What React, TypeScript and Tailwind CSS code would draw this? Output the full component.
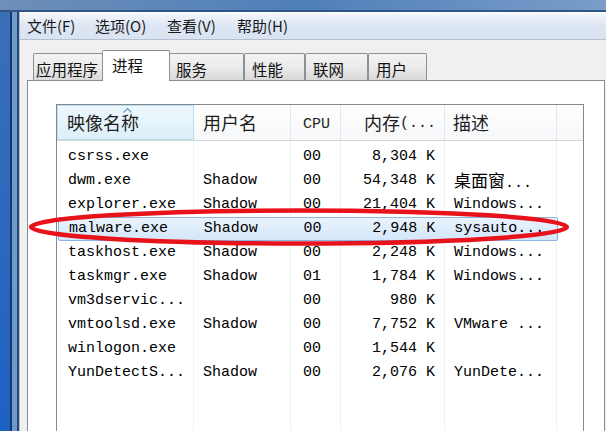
import React from "react";

const cjk = { fontFamily: '"Noto Sans CJK SC", "Noto Sans", sans-serif' };
const mono = { fontFamily: '"Liberation Mono", "Noto Sans CJK SC", monospace' };

const rows: string[][] = [
  ["csrss.exe", "", "00", "8,304 K", ""],
  ["dwm.exe", "Shadow", "00", "54,348 K", "桌面窗..."],
  ["explorer.exe", "Shadow", "00", "21,404 K", "Windows..."],
  ["malware.exe", "Shadow", "00", "2,948 K", "sysauto..."],
  ["taskhost.exe", "Shadow", "00", "2,248 K", "Windows..."],
  ["taskmgr.exe", "Shadow", "01", "1,784 K", "Windows..."],
  ["vm3dservic...", "", "00", "980 K", ""],
  ["vmtoolsd.exe", "Shadow", "00", "7,752 K", "VMware ..."],
  ["winlogon.exe", "", "00", "1,544 K", ""],
  ["YunDetectS...", "Shadow", "00", "2,076 K", "YunDete..."],
];

const tabs = [
  { label: "应用程序", w: "w-[70px]", pl: "pl-[2px]" },
  { label: "进程", w: "w-[68px]", pl: "pl-[9px]", active: true },
  { label: "服务", w: "w-[75px]", pl: "pl-[6px]" },
  { label: "性能", w: "w-[61px]", pl: "pl-[7px]" },
  { label: "联网", w: "w-[63px]", pl: "pl-[7px]" },
  { label: "用户", w: "w-[59px]", pl: "pl-[7px]" },
];

function Tab({ label, w, pl, active }: { label: string; w: string; pl: string; active?: boolean }) {
  if (active) {
    return (
      <div
        className={`${w} ${pl} h-[31px] -mb-px -mx-px z-10 bg-white border border-b-0 border-[#8c8e94] rounded-t-[2px] text-[15.5px] leading-[28px] text-[#111]`}
        style={cjk}
      >
        {label}
      </div>
    );
  }
  return (
    <div
      className={`${w} ${pl} h-[27px] bg-gradient-to-b from-[#f3f3f3] via-[#ebebeb] to-[#d9d9d9] border border-b-0 border-[#8e9096] rounded-t-[2px] text-[15.5px] leading-[30px] text-[#111]`}
      style={cjk}
    >
      {label}
    </div>
  );
}

function HeaderCell({
  w,
  children,
  sorted,
  className = "",
  style,
}: {
  w: string;
  children?: React.ReactNode;
  sorted?: boolean;
  className?: string;
  style?: React.CSSProperties;
}) {
  return (
    <div
      className={`${w} relative h-full flex items-center shrink-0 whitespace-nowrap ${
        sorted
          ? "bg-gradient-to-b from-[#eef8fd] to-[#ddeff9] border border-[#b7dcf2]"
          : "border-r border-[#e3e6ea]"
      } ${className}`}
      style={style}
    >
      {sorted && (
        <svg className="absolute left-[65px] top-[2px]" width="9" height="5" viewBox="0 0 9 5">
          <path d="M0.5 4.5 L4.5 0.5 L8.5 4.5" fill="none" stroke="#6a9cc4" strokeWidth="1.2" />
        </svg>
      )}
      {children}
    </div>
  );
}

export default function App() {
  return (
    <div className="relative w-[606px] h-[431px] overflow-hidden flex flex-col bg-[#f0f0f0]">
      {/* title bar strip */}
      <div className="h-[12px] shrink-0 bg-gradient-to-r from-[#6d8fb8] via-[#4f7fb8] to-[#7a9dc9] border-b-2 border-[#2f5586]" />

      <div className="flex flex-1 min-h-0">
        {/* left frame */}
        <div className="flex shrink-0 w-[20px]">
          <div className="w-[10px] bg-gradient-to-b from-[#3a6fb8] to-[#1d61c4]" />
          <div className="w-[2px] bg-[#1a3766]" />
          <div className="w-[5px] bg-[#6e9bcd]" />
          <div className="w-[2px] bg-[#25497a]" />
          <div className="w-[1px] bg-[#b9bcc2]" />
        </div>

        <div className="flex-1 flex flex-col min-w-0">
          {/* menu bar */}
          <div
            className="h-[28px] shrink-0 flex items-center pl-[7px] bg-gradient-to-b from-[#f4f7fc] via-[#dde6f3] to-[#d9e3f1] border-t border-white border-b border-b-[#b6bfcc] text-[15px] text-[#1a1a1a]"
            style={cjk}
          >
            <span className="w-[68px]">文件(F)</span>
            <span className="w-[72px]">选项(O)</span>
            <span className="w-[70px]">查看(V)</span>
            <span>帮助(H)</span>
          </div>

          {/* tabs */}
          <div className="pt-[10px] pl-[13px] flex items-end h-[40px] shrink-0">
            {tabs.map((t) => (
              <Tab key={t.label} {...t} />
            ))}
          </div>

          {/* panel */}
          <div className="flex-1 ml-[7px] mr-px bg-white border border-[#898c95] pl-[28px] pt-[23px]">
            <div className="w-[528px] h-[400px] border border-[#828790] bg-white flex flex-col">
              {/* header */}
              <div
                className="h-[36px] shrink-0 flex bg-gradient-to-b from-white to-[#f6f7f9] border-b border-[#d5d5d5] text-[18px] text-[#1e1e1e]"
                style={cjk}
              >
                <HeaderCell w="w-[137px]" sorted className="pl-[9px]">
                  映像名称
                </HeaderCell>
                <HeaderCell w="w-[97px]" className="pl-[9px]">
                  用户名
                </HeaderCell>
                <HeaderCell w="w-[50px]" className="pl-[12px] pt-[6px] text-[15px]" style={mono}>
                  CPU
                </HeaderCell>
                <HeaderCell w="w-[104px]" className="pl-[23px]">
                  内存
                  <span className="text-[15px] pt-[4px]" style={mono}>
                    (...
                  </span>
                </HeaderCell>
                <HeaderCell w="w-[112px]" className="pl-[8px]">
                  描述
                </HeaderCell>
                <div className="flex-1" />
              </div>

              {/* body */}
              <div className="relative flex-1 pt-[4px]">
                <div className="absolute inset-0 flex pointer-events-none">
                  <div className="w-[137px] border-r border-[#eef2f7]" />
                  <div className="w-[97px] border-r border-[#eef2f7]" />
                  <div className="w-[50px] border-r border-[#eef2f7]" />
                  <div className="w-[104px] border-r border-[#eef2f7]" />
                  <div className="w-[112px] border-r border-[#eef2f7]" />
                </div>
                {rows.map((r) => {
                  const sel = r[0] === "malware.exe";
                  return (
                    <div
                      key={r[0]}
                      className={`relative h-[24px] w-[500px] ml-px flex items-center text-[15px] text-black ${
                        sel
                          ? "bg-gradient-to-b from-[#eaf3fd] to-[#d3e6fa] border border-[#8db2e3] rounded-[2px]"
                          : ""
                      }`}
                      style={mono}
                    >
                      <div className="w-[136px] pl-[10px] whitespace-pre">{r[0]}</div>
                      <div className="w-[97px] pl-[9px]">{r[1]}</div>
                      <div className="w-[50px] pl-[12px]">{r[2]}</div>
                      <div className="w-[104px] pr-[10px] text-right">{r[3]}</div>
                      <div className="w-[112px] pl-[9px] whitespace-pre">
                        {r[4].startsWith("桌") ? (
                          <span>
                            <span className="text-[17px]" style={cjk}>
                              桌面窗
                            </span>
                            ...
                          </span>
                        ) : (
                          r[4]
                        )}
                      </div>
                    </div>
                  );
                })}
              </div>
            </div>
          </div>
        </div>
      </div>

      {/* red annotation ellipse */}
      <svg className="absolute left-0 top-0 pointer-events-none" width="606" height="431">
        <ellipse cx="299" cy="227" rx="268" ry="16.5" fill="none" stroke="#e8121a" strokeWidth="4.5" />
      </svg>
    </div>
  );
}
